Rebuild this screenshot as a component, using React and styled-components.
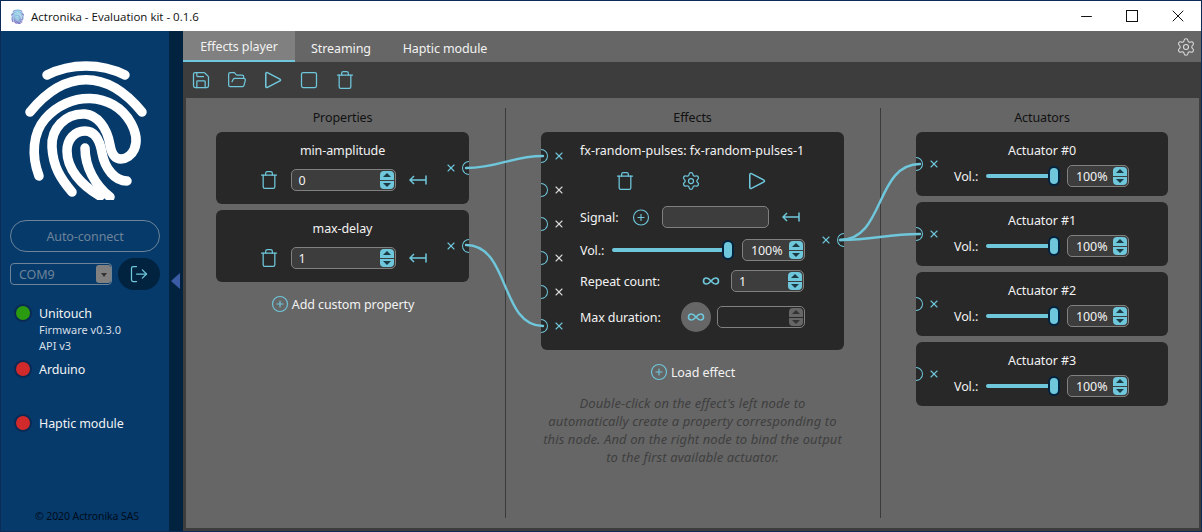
import React from "react";
import styled, { createGlobalStyle } from "styled-components";
import {
  Save,
  FolderOpen,
  Square,
  Trash,
  Settings,
  LogOut,
  Infinity as InfinityIcon,
  CirclePlus,
  X,
  Minus,
} from "lucide-react";

const BLUE = "#6fc7dc";
const FONT = '"Noto Sans", "Open Sans", sans-serif';

const GlobalStyle = createGlobalStyle`
  html, body {
    margin: 0;
    padding: 0;
    overflow: hidden;
    font-family: ${FONT};
  }
`;

const Window = styled.div`
  width: 1202px;
  height: 532px;
  box-sizing: border-box;
  border: 1px solid #0d2b57;
  display: flex;
  flex-direction: column;
  font-size: 12.5px;
  letter-spacing: -0.1px;
  color: #f2f2f2;
`;

const TitleBar = styled.div`
  height: 30px;
  flex: none;
  background: #fff;
  display: flex;
  align-items: center;
  padding-left: 9px;
  color: #111;
  font-size: 11.5px;
  letter-spacing: 0;
`;

const TitleText = styled.span`
  margin-left: 6px;
  font-family: "Open Sans", sans-serif;
`;

const WindowButtons = styled.div`
  margin-left: auto;
  display: flex;
`;

const WindowButton = styled.div`
  width: 46px;
  height: 30px;
  display: flex;
  align-items: center;
  justify-content: center;
  color: #111;
`;

const MaximizeBox = styled.span`
  width: 10px;
  height: 10px;
  border: 1px solid #111;
`;

const Body = styled.div`
  flex: 1;
  display: flex;
  min-height: 0;
`;

const Sidebar = styled.aside`
  width: 168px;
  flex: none;
  background: #053a6b;
  display: flex;
  flex-direction: column;
  padding: 0 9px 8px 9px;
  box-sizing: border-box;
`;

const Logo = styled.svg`
  display: block;
  width: 140px;
  height: 145px;
  margin: 24px 0 0 5px;
`;

const AutoConnect = styled.div`
  height: 32px;
  width: 150px;
  margin-top: 20px;
  box-sizing: border-box;
  border: 1px solid #6d8398;
  border-radius: 16px;
  color: #6d8398;
  display: flex;
  align-items: center;
  justify-content: center;
`;

const PortRow = styled.div`
  display: flex;
  align-items: center;
  margin-top: 6px;
  gap: 6px;
`;

const PortSelect = styled.div`
  width: 102px;
  height: 22px;
  box-sizing: border-box;
  border: 1px solid #6d8398;
  border-radius: 4px;
  color: #6d8398;
  display: flex;
  align-items: center;
  padding-left: 8px;
  position: relative;
`;

const PortCaret = styled.div`
  position: absolute;
  top: 1px;
  right: 0;
  width: 15px;
  height: 18px;
  background: #808080;
  border-radius: 3px;
  display: flex;
  align-items: center;
  justify-content: center;
  &::after {
    content: "";
    border: 3.5px solid transparent;
    border-top: 4px solid #333;
    margin-top: 4px;
  }
`;

const ConnectButton = styled.div`
  width: 42px;
  height: 32px;
  border-radius: 16px;
  background: #02233f;
  color: ${BLUE};
  display: flex;
  align-items: center;
  justify-content: center;
`;

const StatusRow = styled.div`
  display: flex;
  align-items: center;
  height: 18px;
  margin-top: ${(p) => p.$top}px;
`;

const StatusDot = styled.span`
  width: 14px;
  height: 14px;
  margin-left: 6px;
  flex: none;
  border-radius: 50%;
  background: ${(p) => p.$color};
  box-shadow: 0 0 0 2px #0a2a55;
`;

const StatusLabel = styled.span`
  margin-left: 9px;
`;

const StatusDetail = styled.div`
  margin-left: 29px;
  font-size: 11px;
  line-height: 16px;
  letter-spacing: 0;
  color: #d6dfe6;
`;

const Copyright = styled.div`
  margin-top: auto;
  text-align: center;
  font-size: 10.5px;
  color: #000c1a;
  margin-right: -4px;
`;

const Collapser = styled.div`
  width: 14px;
  flex: none;
  background: #02233f;
  display: flex;
  align-items: center;
  &::before {
    content: "";
    margin: 0 0 1px 2px;
    border-style: solid;
    border-width: 8px 9px 8px 0;
    border-color: transparent #3b5ba5 transparent transparent;
  }
`;

const Main = styled.main`
  flex: 1;
  min-width: 0;
  background: #3d3d3d;
  display: flex;
  flex-direction: column;
`;

const Tabs = styled.div`
  height: 31px;
  flex: none;
  background: #666;
  display: flex;
`;

const Tab = styled.div`
  width: ${(p) => p.$width}px;
  box-sizing: border-box;
  display: flex;
  align-items: center;
  justify-content: center;
  padding-top: ${(p) => (p.$active ? 1 : 5)}px;
  background: ${(p) => (p.$active ? "#808080" : "transparent")};
  border-bottom: 2px solid ${(p) => (p.$active ? BLUE : "transparent")};
`;

const TabsGear = styled.div`
  margin-left: auto;
  margin-right: 5px;
  display: flex;
  align-items: center;
  color: #ddd;
`;

const Toolbar = styled.div`
  height: 36px;
  flex: none;
  display: flex;
  align-items: center;
  gap: 16px;
  padding-left: 8px;
  color: ${BLUE};
`;

const Content = styled.div`
  flex: 1;
  min-height: 0;
  margin: 0 2px 3px 3px;
  background: #666;
  display: grid;
  grid-template-columns: 320px 375px 1fr;
  padding-top: 10px;
  position: relative;
`;

const Column = styled.section`
  padding-left: ${(p) => p.$inset}px;
  margin-bottom: 10px;
  border-right: ${(p) => (p.$divider ? "1px solid #3a3a3a" : "none")};
  display: flex;
  flex-direction: column;
  align-items: flex-start;
`;

const ColumnTitle = styled.div`
  width: ${(p) => p.$width}px;
  height: 24px;
  line-height: 19px;
  text-align: center;
  color: #111;
`;

const Stack = styled.div`
  display: flex;
  flex-direction: column;
  gap: 6px;
`;

const Card = styled.div`
  position: relative;
  width: ${(p) => p.$width}px;
  height: ${(p) => p.$height}px;
  box-sizing: border-box;
  background: #282828;
  border-radius: 6px;
  padding-top: 8px;
`;

const CardTitle = styled.div`
  height: 21px;
  line-height: 21px;
  text-align: center;
`;

const PropertyRow = styled.div`
  display: flex;
  align-items: center;
  justify-content: center;
  margin-top: 8px;
  color: ${BLUE};
`;

const Node = styled.span`
  position: absolute;
  top: ${(p) => p.$top - 7}px;
  ${(p) => (p.$side === "left" ? "left: 0;" : "right: 0;")}
  width: 7px;
  height: 14px;
  box-sizing: border-box;
  border: 1.5px solid ${BLUE};
  ${(p) =>
    p.$side === "left"
      ? "border-left: none; border-radius: 0 7px 7px 0;"
      : "border-right: none; border-radius: 7px 0 0 7px;"}
`;

const Unlink = styled.span`
  position: absolute;
  top: ${(p) => p.$top - 6}px;
  ${(p) => (p.$side === "left" ? "left: 12px;" : "right: 12px;")}
  display: flex;
  color: ${(p) => (p.$muted ? "#d8d8d8" : BLUE)};
`;

const NumberBox = styled.div`
  width: ${(p) => p.$width}px;
  height: 22px;
  flex: none;
  box-sizing: border-box;
  background: ${(p) => (p.$disabled ? "#282828" : "#3d3d3d")};
  border: 1px solid #808080;
  border-radius: 5px;
  padding-left: ${(p) => p.$pad || 7}px;
  line-height: 21px;
  color: #f2f2f2;
  position: relative;
`;

const Spinner = styled.div`
  position: absolute;
  top: 1px;
  right: 1px;
  width: 14px;
  height: 18px;
  display: flex;
  flex-direction: column;
  gap: 1px;
`;

const SpinPart = styled.div`
  flex: 1;
  background: ${(p) => (p.$disabled ? "#666" : BLUE)};
  border-radius: ${(p) => (p.$up ? "4px 4px 0 0" : "0 0 4px 4px")};
  display: flex;
  align-items: center;
  justify-content: center;
  &::after {
    content: "";
    border-left: 4px solid transparent;
    border-right: 4px solid transparent;
    ${(p) =>
      p.$up
        ? `border-bottom: 4px solid ${p.$disabled ? "#333" : "#1c3a44"};`
        : `border-top: 4px solid ${p.$disabled ? "#333" : "#1c3a44"};`}
  }
`;

const EffectHeader = styled.div`
  height: 22px;
  line-height: 22px;
  padding-left: 39px;
  letter-spacing: 0;
`;

const EffectIcons = styled.div`
  height: 38px;
  display: flex;
  align-items: center;
  justify-content: center;
  gap: 46px;
  margin-right: 3px;
  color: ${BLUE};
`;

const EffectRow = styled.div`
  height: ${(p) => p.$height}px;
  width: 225px;
  margin-left: 39px;
  display: flex;
  align-items: center;
  color: #f2f2f2;
`;

const RowLabel = styled.span`
  flex: none;
  width: ${(p) => p.$width}px;
`;

const RowIcon = styled.span`
  display: flex;
  align-items: center;
  justify-content: center;
  flex: none;
  color: ${BLUE};
  width: ${(p) => p.$width}px;
  margin-left: ${(p) => p.$left || 0}px;
  margin-right: ${(p) => p.$right || 0}px;
`;

const InfinityRound = styled.span`
  width: 30px;
  height: 30px;
  flex: none;
  margin-left: auto;
  margin-right: 6px;
  border-radius: 50%;
  background: #666;
  color: ${BLUE};
  display: flex;
  align-items: center;
  justify-content: center;
`;

const Slider = styled.div`
  position: relative;
  width: ${(p) => p.$width}px;
  height: 4px;
  flex: none;
  background: ${BLUE};
  border-radius: 2px;
  margin-left: ${(p) => p.$left}px;
  margin-right: ${(p) => p.$right}px;
`;

const SliderThumb = styled.span`
  position: absolute;
  top: -8px;
  right: -1px;
  width: 8px;
  height: 16px;
  background: ${BLUE};
  border: 2px solid #02233f;
  border-radius: 6px;
`;

const ActuatorRow = styled.div`
  display: flex;
  align-items: center;
  margin: 4px 0 0 38px;
`;

const AddButton = styled.div`
  display: flex;
  align-items: center;
  justify-content: center;
  gap: 3px;
  width: ${(p) => p.$width}px;
  height: 20px;
  margin-top: 12px;
  color: #f2f2f2;
  & > svg {
    color: ${BLUE};
  }
`;

const Note = styled.p`
  width: 303px;
  margin: 12px 0 0;
  text-align: center;
  font-style: italic;
  font-size: 13px;
  letter-spacing: 0.1px;
  line-height: 18px;
  color: #3f3f3f;
`;

const Wires = styled.svg`
  position: absolute;
  inset: 0;
  width: 100%;
  height: 100%;
  pointer-events: none;
`;

const Fingerprint = ({ stroke, width }) => (
  <g fill="none" stroke={stroke} strokeWidth={width} strokeLinecap="round" strokeLinejoin="round">
    <path d="M32 20C56 8 86 8 110 20" />
    <path d="M15 57C50 14 92 14 127 57" />
    <path d="M24 121C16 100 18 78 30 64C54 36 98 36 116 68C128 90 116 104 106 104C98 104 96 96 95 90C92 72 82 60 70 59C50 58 36 74 37 92C38 112 46 124 57 137" />
    <path d="M85 141C66 130 52 114 52 96C52 84 60 76 70 76C80 76 85 86 87 98C90 114 100 126 112 126" />
    <path d="M70 93C70 112 80 130 95 142" />
  </g>
);

const BindArrow = () => (
  <svg width="18" height="10" viewBox="0 0 18 10" fill="none" stroke={BLUE} strokeWidth="1.5">
    <path d="M1 5H17M17 .5V9.5M5 1L1 5L5 9" />
  </svg>
);

const PlayIcon = () => (
  <svg width="20" height="20" viewBox="-1 -1 18 18" fill="none" stroke="currentColor" strokeWidth="1.4" strokeLinejoin="round">
    <path d="M1.5 2.2C1.5 1.4 2.3 1 3 1.4L14.2 7.2C14.9 7.6 14.9 8.4 14.2 8.8L3 14.6C2.3 15 1.5 14.6 1.5 13.8Z" />
  </svg>
);

const Close = () => <X size={12} strokeWidth={2.2} />;

const NumberInput = ({ width, value, disabled, pad }) => (
  <NumberBox $width={width} $disabled={disabled} $pad={pad}>
    {value}
    <Spinner>
      <SpinPart $up $disabled={disabled} />
      <SpinPart $disabled={disabled} />
    </Spinner>
  </NumberBox>
);

const PropertyCard = ({ name, value }) => (
  <Card $width={253} $height={72}>
    <CardTitle>{name}</CardTitle>
    <PropertyRow>
      <Trash size={20} strokeWidth={1.5} />
      <RowIcon $width={0} $right={12} />
      <NumberInput width={105} value={value} />
      <RowIcon $width={18} $left={13}>
        <BindArrow />
      </RowIcon>
    </PropertyRow>
    <Unlink $side="right" $top={36}>
      <Close />
    </Unlink>
    <Node $side="right" $top={36} />
  </Card>
);

const ActuatorCard = ({ index }) => (
  <Card $width={252} $height={64}>
    <CardTitle>Actuator #{index}</CardTitle>
    <ActuatorRow>
      <RowLabel $width={26}>Vol.:</RowLabel>
      <Slider $width={73} $left={6} $right={8}>
        <SliderThumb />
      </Slider>
      <NumberInput width={62} value="100%" pad={8} />
    </ActuatorRow>
    <Node $side="left" $top={32} />
    <Unlink $side="left" $top={32}>
      <Close />
    </Unlink>
  </Card>
);

const leftNodes = [24, 58, 92, 126, 160, 194];

export default function App() {
  return (
    <Window>
      <GlobalStyle />
      <TitleBar>
        <svg width="15" height="15" viewBox="0 0 140 145">
          <defs>
            <linearGradient id="print" x1="0" y1="0" x2="0" y2="1">
              <stop offset="0" stopColor="#8fd6e8" />
              <stop offset="1" stopColor="#7a6fc0" />
            </linearGradient>
          </defs>
          <rect x="10" y="5" width="120" height="135" rx="55" fill="url(#print)" opacity="0.45" />
          <Fingerprint stroke="url(#print)" width={12} />
        </svg>
        <TitleText>Actronika - Evaluation kit - 0.1.6</TitleText>
        <WindowButtons>
          <WindowButton>
            <Minus size={17} strokeWidth={1.4} />
          </WindowButton>
          <WindowButton>
            <MaximizeBox />
          </WindowButton>
          <WindowButton>
            <X size={20} strokeWidth={1.2} />
          </WindowButton>
        </WindowButtons>
      </TitleBar>
      <Body>
        <Sidebar>
          <Logo viewBox="0 0 140 145">
            <Fingerprint stroke="#fff" width={9.5} />
          </Logo>
          <AutoConnect>Auto-connect</AutoConnect>
          <PortRow>
            <PortSelect>
              COM9
              <PortCaret />
            </PortSelect>
            <ConnectButton>
              <LogOut size={20} strokeWidth={1.5} />
            </ConnectButton>
          </PortRow>
          <StatusRow $top={14}>
            <StatusDot $color="#2a9a10" />
            <StatusLabel>Unitouch</StatusLabel>
          </StatusRow>
          <StatusDetail>Firmware v0.3.0</StatusDetail>
          <StatusDetail>API v3</StatusDetail>
          <StatusRow $top={6}>
            <StatusDot $color="#d02a2a" />
            <StatusLabel>Arduino</StatusLabel>
          </StatusRow>
          <StatusRow $top={36}>
            <StatusDot $color="#d02a2a" />
            <StatusLabel>Haptic module</StatusLabel>
          </StatusRow>
          <Copyright>© 2020 Actronika SAS</Copyright>
        </Sidebar>
        <Collapser />
        <Main>
          <Tabs>
            <Tab $active $width={112}>Effects player</Tab>
            <Tab $width={92}>Streaming</Tab>
            <Tab $width={116}>Haptic module</Tab>
            <TabsGear>
              <Settings size={20} strokeWidth={1.3} />
            </TabsGear>
          </Tabs>
          <Toolbar>
            <Save size={20} strokeWidth={1.5} />
            <FolderOpen size={20} strokeWidth={1.5} />
            <PlayIcon />
            <Square size={20} strokeWidth={1.5} />
            <Trash size={20} strokeWidth={1.5} />
          </Toolbar>
          <Content>
            <Column $inset={30} $divider>
              <ColumnTitle $width={253}>Properties</ColumnTitle>
              <Stack>
                <PropertyCard name="min-amplitude" value="0" />
                <PropertyCard name="max-delay" value="1" />
              </Stack>
              <AddButton $width={253}>
                <CirclePlus size={18} strokeWidth={1.5} />
                Add custom property
              </AddButton>
            </Column>
            <Column $inset={35} $divider>
              <ColumnTitle $width={303}>Effects</ColumnTitle>
              <Card $width={303} $height={218}>
                <EffectHeader>fx-random-pulses: fx-random-pulses-1</EffectHeader>
                <EffectIcons>
                  <Trash size={20} strokeWidth={1.5} />
                  <Settings size={20} strokeWidth={1.5} />
                  <PlayIcon />
                </EffectIcons>
                <EffectRow $height={34}>
                  <RowLabel $width={52}>Signal:</RowLabel>
                  <RowIcon $width={18} $right={12}>
                    <CirclePlus size={19} strokeWidth={1.5} />
                  </RowIcon>
                  <NumberBox $width={107} />
                  <RowIcon $width={18} $left={13}>
                    <BindArrow />
                  </RowIcon>
                </EffectRow>
                <EffectRow $height={32}>
                  <RowLabel $width={26}>Vol.:</RowLabel>
                  <Slider $width={121} $left={6} $right={9}>
                    <SliderThumb />
                  </Slider>
                  <NumberInput width={63} value="100%" pad={8} />
                </EffectRow>
                <EffectRow $height={30}>
                  <RowLabel $width={122}>Repeat count:</RowLabel>
                  <RowIcon $width={18} $right={11}>
                    <InfinityIcon size={18} strokeWidth={2.2} />
                  </RowIcon>
                  <NumberInput width={73} value="1" />
                </EffectRow>
                <EffectRow $height={42}>
                  <span>Max duration:</span>
                  <InfinityRound>
                    <InfinityIcon size={18} strokeWidth={2.2} />
                  </InfinityRound>
                  <NumberInput width={88} disabled />
                </EffectRow>
                {leftNodes.map((top, i) => (
                  <React.Fragment key={top}>
                    <Node $side="left" $top={top} />
                    <Unlink $side="left" $top={top} $muted={i > 0 && i < 5}>
                      <Close />
                    </Unlink>
                  </React.Fragment>
                ))}
                <Node $side="right" $top={108} />
                <Unlink $side="right" $top={108}>
                  <Close />
                </Unlink>
              </Card>
              <AddButton $width={303}>
                <CirclePlus size={18} strokeWidth={1.5} />
                Load effect
              </AddButton>
              <Note>
                Double-click on the effect's left node to
                <br />
                automatically create a property corresponding to
                <br />
                this node. And on the right node to bind the output
                <br />
                to the first available actuator.
              </Note>
            </Column>
            <Column $inset={35}>
              <ColumnTitle $width={252}>Actuators</ColumnTitle>
              <Stack>
                <ActuatorCard index={0} />
                <ActuatorCard index={1} />
                <ActuatorCard index={2} />
                <ActuatorCard index={3} />
              </Stack>
            </Column>
            <Wires viewBox="186 98 1013 430" preserveAspectRatio="xMinYMin">
              <g fill="none" stroke={BLUE} strokeWidth="2.4" strokeLinecap="round">
                <path d="M466 168C500 168 510 156 543 156" />
                <path d="M466 245C510 245 500 326 543 326" />
                <path d="M840 240C885 240 875 164 920 164" />
                <path d="M840 240C875 240 885 234 920 234" />
              </g>
            </Wires>
          </Content>
        </Main>
      </Body>
    </Window>
  );
}
